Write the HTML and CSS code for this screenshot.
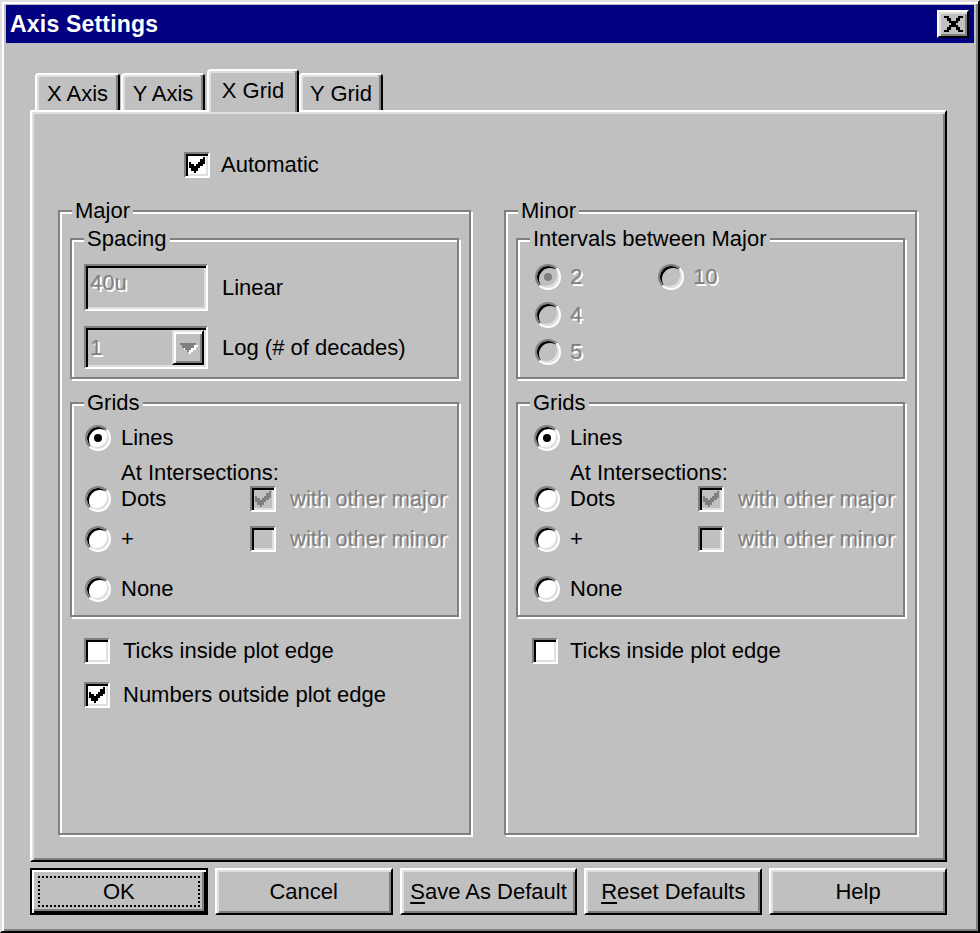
FILE: index.html
```html
<!DOCTYPE html>
<html lang="en">
<head>
<meta charset="utf-8">
<title>Axis Settings</title>
<link rel="stylesheet" href="styles.css">
</head>
<body>
<div class="window">
  <div class="titlebar">
    <span class="title">Axis Settings</span>
    <span class="close"><svg width="19" height="16" viewBox="0 0 8 7" shape-rendering="crispEdges"><path fill="#000" d="M0 0h2v1H0zM6 0h2v1H6zM1 1h2v1H1zM5 1h2v1H5zM2 2h4v1H2zM3 3h2v1H3zM2 4h4v1H2zM1 5h2v1H1zM5 5h2v1H5zM0 6h2v1H0zM6 6h2v1H6z"/></svg></span>
  </div>
  <div class="body">
    <div class="tabs">
      <div class="tab w1">X Axis</div>
      <div class="tab w2">Y Axis</div>
      <div class="tab active w3">X Grid</div>
      <div class="tab w4">Y Grid</div>
    </div>
    <div class="panel">
      <div class="auto"><span class="cb"><svg class="chk" viewBox="0 0 7 7" shape-rendering="crispEdges"><path d="M6 0h1v3H6zM5 1h1v3H5zM4 2h1v3H4zM3 3h1v3H3zM2 4h1v3H2zM1 3h1v3H1zM0 2h1v3H0z"/></svg></span><span>Automatic</span></div>
      <div class="groups">
        <fieldset class="grp">
          <legend>Major</legend>
          <div class="gb">
            <fieldset class="grp sub">
              <legend>Spacing</legend>
              <div class="spacing">
                <div class="frow"><div class="edit"><span class="dis">40u</span></div><span>Linear</span></div>
                <div class="frow second"><div class="combo"><span class="val dis">1</span><span class="drop"><svg width="16" height="9" viewBox="0 0 7 4" shape-rendering="crispEdges"><path fill="#808080" d="M0 0h7v1H0zM1 1h5v1H1zM2 2h3v1H2zM3 3h1v1H3z"/></svg></span></div><span>Log (# of decades)</span></div>
              </div>
            </fieldset>
            <fieldset class="grp sub gridsbox">
              <legend>Grids</legend>
              <div class="grids major-grids">
                <div class="opt full"><span class="radio on"></span><span>Lines</span></div>
                <div class="note">At Intersections:</div>
                <div class="opt"><span class="radio"></span><span>Dots</span></div>
                <div class="opt ck"><span class="cb dis-box"><svg class="chk" viewBox="0 0 7 7" shape-rendering="crispEdges"><path d="M6 0h1v3H6zM5 1h1v3H5zM4 2h1v3H4zM3 3h1v3H3zM2 4h1v3H2zM1 3h1v3H1zM0 2h1v3H0z"/></svg></span><span class="dis">with other major</span></div>
                <div class="opt"><span class="radio"></span><span>+</span></div>
                <div class="opt ck"><span class="cb dis-box"></span><span class="dis">with other minor</span></div>
                <div class="opt full"><span class="radio"></span><span>None</span></div>
              </div>
            </fieldset>
            <div class="chkrow first major-chk"><span class="cb"></span><span>Ticks inside plot edge</span></div>
            <div class="chkrow major-chk"><span class="cb"><svg class="chk" viewBox="0 0 7 7" shape-rendering="crispEdges"><path d="M6 0h1v3H6zM5 1h1v3H5zM4 2h1v3H4zM3 3h1v3H3zM2 4h1v3H2zM1 3h1v3H1zM0 2h1v3H0z"/></svg></span><span>Numbers outside plot edge</span></div>
          </div>
        </fieldset>
        <fieldset class="grp">
          <legend>Minor</legend>
          <div class="gb">
            <fieldset class="grp sub">
              <legend>Intervals between Major</legend>
              <div class="intervals">
                <div class="opt"><span class="radio dis-radio on"></span><span class="dis">2</span></div>
                <div class="opt"><span class="radio dis-radio"></span><span class="dis">10</span></div>
                <div class="opt"><span class="radio dis-radio"></span><span class="dis">4</span></div>
                <div></div>
                <div class="opt"><span class="radio dis-radio"></span><span class="dis">5</span></div>
              </div>
            </fieldset>
            <fieldset class="grp sub gridsbox">
              <legend>Grids</legend>
              <div class="grids minor-grids">
                <div class="opt full"><span class="radio on"></span><span>Lines</span></div>
                <div class="note">At Intersections:</div>
                <div class="opt"><span class="radio"></span><span>Dots</span></div>
                <div class="opt ck"><span class="cb dis-box"><svg class="chk" viewBox="0 0 7 7" shape-rendering="crispEdges"><path d="M6 0h1v3H6zM5 1h1v3H5zM4 2h1v3H4zM3 3h1v3H3zM2 4h1v3H2zM1 3h1v3H1zM0 2h1v3H0z"/></svg></span><span class="dis">with other major</span></div>
                <div class="opt"><span class="radio"></span><span>+</span></div>
                <div class="opt ck"><span class="cb dis-box"></span><span class="dis">with other minor</span></div>
                <div class="opt full"><span class="radio"></span><span>None</span></div>
              </div>
            </fieldset>
            <div class="chkrow first minor-chk"><span class="cb"></span><span>Ticks inside plot edge</span></div>
          </div>
        </fieldset>
      </div>
    </div>
    <div class="buttons">
      <div class="btn default"><span class="focus">OK</span></div>
      <div class="btn">Cancel</div>
      <div class="btn"><span><u>S</u>ave As Default</span></div>
      <div class="btn"><span><u>R</u>eset Defaults</span></div>
      <div class="btn">Help</div>
    </div>
  </div>
</div>
</body>
</html>
```

FILE: styles.css
```css
* { box-sizing: border-box; }
html, body { margin: 0; padding: 0; }
body {
  width: 980px;
  height: 933px;
  overflow: hidden;
  background: #c0c0c0;
  font-family: "Liberation Sans", Arial, sans-serif;
  font-size: 22px;
  line-height: 26px;
  color: #000;
}
.window {
  width: 980px;
  height: 933px;
  display: flex;
  flex-direction: column;
  background: #c0c0c0;
  border: 2px solid;
  border-color: #dfdfdf #000 #000 #dfdfdf;
  box-shadow: inset 2px 2px #fff, inset -2px -2px #808080;
  padding: 3px 4px 4px 4px;
}
.titlebar {
  flex: none;
  height: 38px;
  background: #000080;
  color: #fff;
  display: flex;
  align-items: center;
  justify-content: space-between;
  padding: 0 5px 0 4px;
}
.title { font-weight: bold; font-size: 23px; letter-spacing: 0.2px; }
.close {
  width: 32px;
  height: 28px;
  background: #c0c0c0;
  border: 2px solid;
  border-color: #fff #000 #000 #fff;
  box-shadow: inset 2px 2px #dfdfdf, inset -2px -2px #808080;
  display: flex;
  align-items: center;
  justify-content: center;
}
.close svg { display: block; }
.body {
  flex: 1;
  display: flex;
  flex-direction: column;
  padding: 26px 27px 12px 24px;
}
.tabs {
  flex: none;
  height: 41px;
  display: flex;
  align-items: flex-end;
  padding-left: 5px;
}
.tab {
  height: 37px;
  display: flex;
  align-items: center;
  justify-content: center;
  border: 2px solid;
  border-bottom: none;
  border-color: #fff #000 transparent #fff;
  border-radius: 4px 4px 0 0;
  box-shadow: inset -2px 0 #808080, inset 2px 2px #dfdfdf;
  background: #c0c0c0;
  padding-top: 2px;
}
.w1 { width: 85px; margin-right: 1px; }
.w2 { width: 84px; }
.w3 { width: 92px; margin-left: 2px; }
.w4 { width: 84px; }
.tab.active {
  height: 43px;
  margin-bottom: -2px;
  position: relative;
  z-index: 1;
  padding-top: 0;
  padding-bottom: 2px;
}
.panel {
  flex: 1;
  display: flex;
  flex-direction: column;
  border: 2px solid;
  border-color: #fff #000 #000 #fff;
  box-shadow: inset 2px 2px #dfdfdf, inset -2px -2px #808080;
  padding: 40px 28px 25px 26px;
}
.auto {
  display: flex;
  align-items: center;
  gap: 11px;
  margin-left: 126px;
  height: 26px;
}
.groups {
  flex: 1;
  margin-top: 20px;
  display: grid;
  grid-template-columns: 1fr 1fr;
  column-gap: 33px;
}
fieldset.grp {
  margin: 0;
  padding: 0;
  min-width: 0;
  border: 2px solid #808080;
  box-shadow: inset 2px 2px #fff, 2px 2px #fff;
}
fieldset.grp > legend {
  margin-left: 12px;
  padding: 0 3px;
  line-height: 26px;
  background: #c0c0c0;
}
.gb { padding: 1px 10px 0; }
fieldset.sub { margin-top: 1px; }
fieldset.gridsbox { margin-top: 11px; }
.spacing { padding: 12px 0 8px 12px; }
.frow { display: flex; align-items: center; gap: 14px; }
.frow.second { margin-top: 15px; }
.edit {
  width: 124px;
  height: 47px;
  border: 2px solid;
  border-color: #808080 #fff #fff #808080;
  box-shadow: inset 2px 2px #000, inset -2px -2px #dfdfdf;
  padding: 4px 4px;
}
.combo {
  width: 124px;
  height: 43px;
  display: flex;
  align-items: center;
  border: 2px solid;
  border-color: #808080 #fff #fff #808080;
  box-shadow: inset 2px 2px #000, inset -2px -2px #dfdfdf;
  padding: 2px;
}
.combo .val { flex: 1; padding-left: 2px; }
.drop {
  width: 32px;
  height: 35px;
  border: 2px solid;
  border-color: #dfdfdf #000 #000 #dfdfdf;
  box-shadow: inset 2px 2px #fff, inset -2px -2px #808080;
  display: flex;
  align-items: center;
  justify-content: center;
}
.drop svg { display: block; filter: drop-shadow(2px 2px 0 #fff); }
.dis { color: #808080; text-shadow: 2px 2px 0 #fff; }
.grids {
  display: grid;
  grid-template-rows: 26px 35px 26px 40px 50px;
  align-items: end;
  padding: 9px 0 13px 13px;
}
.major-grids { grid-template-columns: 165px 1fr; }
.minor-grids { grid-template-columns: 164px 1fr; padding-left: 16px; }
.full, .note { grid-column: 1 / -1; }
.note { padding-left: 36px; }
.opt { display: flex; align-items: center; gap: 10px; height: 26px; }
.opt.ck { gap: 14px; }
.radio {
  width: 26px;
  height: 26px;
  flex: none;
  border-radius: 50%;
  background: #fff;
  border: 2px solid;
  border-color: #808080 #fff #fff #808080;
  box-shadow: inset 2px 2px #000, inset -2px -2px #dfdfdf;
  display: flex;
  align-items: center;
  justify-content: center;
}
.radio.on::after {
  content: "";
  width: 8px;
  height: 8px;
  border-radius: 50%;
  background: #000;
}
.radio.dis-radio { background: #c0c0c0; }
.radio.dis-radio.on::after { background: #808080; }
.cb {
  width: 26px;
  height: 26px;
  flex: none;
  background: #fff;
  border: 2px solid;
  border-color: #808080 #fff #fff #808080;
  box-shadow: inset 2px 2px #000, inset -2px -2px #dfdfdf;
  display: flex;
  align-items: center;
  justify-content: center;
}
.cb .chk { width: 16px; height: 16px; display: block; fill: #000; }
.cb.dis-box { background: #c0c0c0; }
.cb.dis-box .chk { fill: #808080; }
.intervals {
  display: grid;
  grid-template-columns: 123px 1fr;
  grid-template-rows: 26px 26px 26px;
  row-gap: 11.5px;
  padding: 12px 0 12px 17px;
}
.intervals .opt { gap: 9px; }
.chkrow { display: flex; align-items: center; gap: 13px; height: 26px; margin-top: 18px; }
.chkrow.first { margin-top: 21px; }
.major-chk { margin-left: 14px; }
.minor-chk { margin-left: 16px; gap: 12px; }
.buttons {
  flex: none;
  height: 47px;
  margin-top: 6px;
  display: grid;
  grid-template-columns: repeat(5, 1fr);
  column-gap: 7px;
}
.btn {
  display: flex;
  align-items: center;
  justify-content: center;
  border: 2px solid;
  border-color: #fff #000 #000 #fff;
  box-shadow: inset 2px 2px #dfdfdf, inset -2px -2px #808080;
}
.btn u { text-decoration-thickness: 2px; text-underline-offset: 3px; }
.btn.default {
  border-color: #000;
  box-shadow: inset 2px 2px #fff, inset -2px -2px #000, inset -4px -4px #808080;
  padding: 6px 6px 6px 6px;
}
.focus {
  flex: 1;
  align-self: stretch;
  display: flex;
  align-items: center;
  justify-content: center;
  border: 2px dotted #000;
}
```
